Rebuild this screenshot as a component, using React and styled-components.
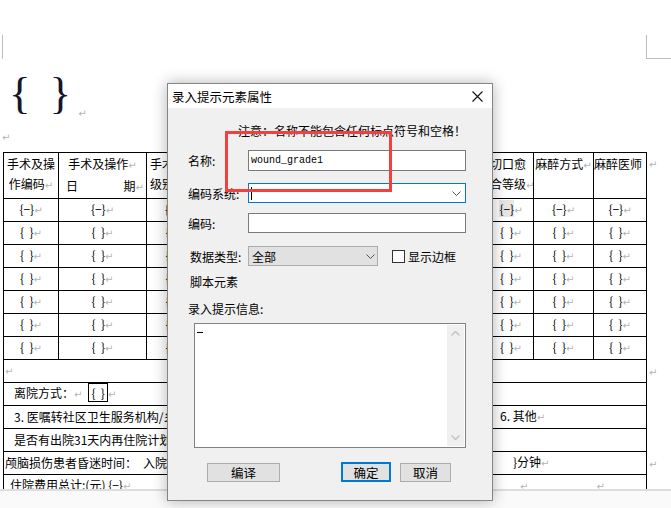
import styled, { createGlobalStyle } from 'styled-components'

const Global = createGlobalStyle`
  html, body { margin: 0; padding: 0; background: #fff; }
  body {
    font-family: "Noto Sans CJK SC", "Liberation Sans", sans-serif;
    font-size: 12px;
    color: #000;
  }
`
const Viewport = styled.div`
  position: relative;
  width: 671px;
  height: 508px;
  overflow: hidden;
  display: flex;
  flex-direction: column;
`
const Page = styled.div`
  height: 489px;
  flex: none;
  overflow: hidden;
  background: #fff;
  border-bottom: 2px solid #dedede;
`
const PageGap = styled.div`
  flex: 1;
  background: #fafafa;
`
const MarksRow = styled.div`
  display: flex;
  margin-top: 35px;
  height: 24px;
`
const CropMark = styled.div`
  box-sizing: border-box;
  width: ${p => p.right ? '25px' : '3px'};
  margin-left: ${p => p.right ? 'auto' : '0'};
  border-right: ${p => p.right ? 'none' : '1px solid #bdbdbd'};
  border-left: ${p => p.right ? '1px solid #bdbdbd' : 'none'};
  border-bottom: ${p => p.right ? '1px solid #bdbdbd' : 'none'};
`
const BraceLine = styled.div`
  display: flex;
  align-items: flex-end;
  height: 60px;
  padding-left: 9px;
`
const Brace = styled.span`
  font-family: "Liberation Serif", serif;
  font-size: 45px;
  line-height: 52px;
  color: #14142a;
  margin-right: ${p => p.gap || 0}px;
`
const Ret = styled.span`
  font-family: "DejaVu Sans", sans-serif;
  font-size: 10px;
  color: #b4b4b4;
  margin-left: ${p => p.ml || 0}px;
`
const EmptyPara = styled.div`
  display: flex;
  align-items: flex-end;
  height: 26px;
  padding-left: 2px;
  line-height: 14px;
  margin-bottom: 7px;
`
const DocTable = styled.table`
  border-collapse: collapse;
  table-layout: fixed;
  width: 665px;
  margin-left: 3px;
`
const Row = styled.tr`
  height: ${p => p.h || 23}px;
`
const Cell = styled.td`
  border: 1px solid #000;
  padding: ${p => p.top ? '1px' : '0'} ${p => p.pad || 0}px 0;
  text-align: ${p => p.align || 'center'};
  vertical-align: ${p => p.top ? 'top' : 'middle'};
  line-height: 20px;
  white-space: nowrap;
  overflow: hidden;
  font-size: 12px;
`
const OutCell = styled.td`
  border: none;
  padding: 0 0 0 2px;
  vertical-align: ${p => p.top ? 'top' : 'bottom'};
  line-height: 20px;
`
const Spread = styled.div`
  display: flex;
  justify-content: space-between;
  padding: 0 2px 0 7px;
`
const Mark = styled.span`
  background: ${p => p.hl ? '#e6e6e6' : 'transparent'};
`
const Boxed = styled.span`
  border: 1px solid #000;
  padding: 0 2px;
  margin-left: 6px;
`
const SplitLine = styled.div`
  display: flex;
  align-items: center;
  padding-left: ${p => p.pl || 0}px;
`
const RightPart = styled.span`
  margin-left: auto;
  width: ${p => p.w}px;
`

const Dialog = styled.div`
  position: absolute;
  left: 167px;
  top: 83px;
  width: 326px;
  height: 418px;
  box-sizing: border-box;
  border: 1px solid #858585;
  background: #f0f0f0;
  box-shadow: 0 0 14px rgba(0, 0, 0, 0.3);
  font-family: "Noto Sans CJK SC", "Liberation Sans", sans-serif;
  font-size: 12px;
`
const TitleBar = styled.div`
  height: 24px;
  background: #fff;
  display: flex;
  align-items: center;
  justify-content: space-between;
  padding: 0 9px 0 4px;
  font-size: 12.5px;
`
const Body = styled.div`
  position: relative;
  padding-left: 20px;
`
const Note = styled.div`
  margin-top: 13px;
  height: 20px;
  line-height: 20px;
  padding-left: 50px;
`
const Annotation = styled.div`
  position: absolute;
  left: 57px;
  top: 10px;
  width: 167px;
  height: 61px;
  box-sizing: border-box;
  border: 3px solid #f2403f;
`
const FieldRow = styled.div`
  display: flex;
  align-items: center;
  margin-top: ${p => p.mt}px;
  height: ${p => p.h || 20}px;
`
const Label = styled.div`
  width: ${p => p.w || 60}px;
  padding-left: ${p => p.pl || 0}px;
  box-sizing: border-box;
`
const TextInput = styled.div`
  box-sizing: border-box;
  width: 218px;
  height: ${p => p.h || 20}px;
  background: #fff;
  border: 1px solid ${p => p.focus ? '#0078d7' : '#7a7a7a'};
  display: flex;
  align-items: center;
  padding: 0 2px;
  font-family: "Liberation Mono", monospace;
  font-size: 10px;
`
const Caret = styled.span`
  width: 1px;
  height: 13px;
  background: #000;
`
const Chevron = styled.svg`
  margin-left: auto;
  margin-right: 2px;
`
const Select = styled.div`
  box-sizing: border-box;
  width: 130px;
  height: 20px;
  background: #e1e1e1;
  border: 1px solid #adadad;
  display: flex;
  align-items: center;
  padding-left: 3px;
`
const Check = styled.span`
  box-sizing: border-box;
  width: 13px;
  height: 13px;
  border: 1px solid #333;
  background: #fff;
  margin: 0 3px 0 14px;
`
const PlainLine = styled.div`
  margin-top: ${p => p.mt}px;
  height: 20px;
  line-height: 20px;
  padding-left: ${p => p.pl || 0}px;
`
const MemoBox = styled.div`
  box-sizing: border-box;
  margin: 4px 0 0 6px;
  width: 272px;
  height: 125px;
  background: #fff;
  border: 1px solid #828282;
  display: flex;
`
const MemoText = styled.div`
  flex: 1;
  padding: 6px 0 0 2px;
`
const Underscore = styled.div`
  width: 6px;
  height: 1px;
  background: #000;
  margin-top: 2px;
`
const ScrollBar = styled.div`
  width: 17px;
  background: #f0f0f0;
  margin: 1px 1px 1px 0;
  display: flex;
  flex-direction: column;
  justify-content: space-between;
  align-items: center;
  padding: 6px 0;
`
const ButtonRow = styled.div`
  display: flex;
  margin-top: 14px;
  padding-left: 19px;
  align-items: center;
`
const Button = styled.div`
  box-sizing: border-box;
  width: ${p => p.w}px;
  height: ${p => p.primary ? 20 : 19}px;
  margin-left: ${p => p.ml || 0}px;
  background: #e1e1e1;
  border: ${p => p.primary ? '2px solid #0078d7' : '1px solid #adadad'};
  display: flex;
  align-items: center;
  justify-content: center;
  font-size: 12.5px;
`

const down = (
  <Chevron width="9" height="5" viewBox="0 0 9 5">
    <path d="M0.5 0.5 L4.5 4.5 L8.5 0.5" fill="none" stroke="#555" strokeWidth="1" />
  </Chevron>
)

const Arrow = ({ up }) => (
  <svg width="9" height="5" viewBox="0 0 9 5">
    <path d={up ? 'M0.5 4.5 L4.5 0.5 L8.5 4.5' : 'M0.5 0.5 L4.5 4.5 L8.5 0.5'} fill="none" stroke="#c2c2c2" strokeWidth="1.4" />
  </svg>
)

const widths = [55, 88, 60, 140, 50, 46, 46, 45, 60, 53, 22]
const EMPTY = '{\u00a0\u00a0}'

const App = () => {
  const dataRows = [0, 1, 2, 3, 4, 5, 6]
  return (
    <Viewport>
      <Global />
      <Page>
        <MarksRow>
          <CropMark />
          <CropMark right />
        </MarksRow>
        <BraceLine>
          <Brace gap={19}>{'{'}</Brace>
          <Brace>{'}'}</Brace>
          <Ret ml={7}>↵</Ret>
        </BraceLine>
        <EmptyPara><Ret>↵</Ret></EmptyPara>
        <DocTable>
          <colgroup>
            {widths.map((w, i) => <col key={i} style={{ width: w }} />)}
          </colgroup>
          <tbody>
            <Row h={44}>
              <Cell top>手术及操<br />作编码<Ret>↵</Ret></Cell>
              <Cell top>手术及操作<Ret>↵</Ret><Spread><span>日</span><span>期<Ret>↵</Ret></span></Spread></Cell>
              <Cell top align="left" pad={3}>手术及操作<br />级别</Cell>
              <Cell top>手术及操作名称</Cell>
              <Cell top>术　者</Cell>
              <Cell top>Ⅰ　助</Cell>
              <Cell top>Ⅱ　助</Cell>
              <Cell top align="left" pad={1}>切口愈<br />合等级<Ret>↵</Ret></Cell>
              <Cell top>麻醉方式<Ret>↵</Ret></Cell>
              <Cell top align="left" pad={0}>麻醉医师</Cell>
              <OutCell top><Ret>↵</Ret></OutCell>
            </Row>
            {dataRows.map(r => (
              <Row key={r}>
                {widths.slice(0, 10).map((w, i) => (
                  <Cell key={i}>
                    <Mark hl={r === 0 && i === 7}>{r === 0 ? '{−}' : EMPTY}</Mark><Ret>↵</Ret>
                  </Cell>
                ))}
                <OutCell />
              </Row>
            ))}
            <Row>
              <Cell colSpan={10} align="left" pad={1}><Ret>↵</Ret></Cell>
              <OutCell><Ret>↵</Ret></OutCell>
            </Row>
            <Row>
              <Cell colSpan={10} align="left" pad={10}>
                离院方式：<Ret>↵</Ret><Boxed>{EMPTY}</Boxed><Ret>↵</Ret>
              </Cell>
              <OutCell />
            </Row>
            <Row>
              <Cell colSpan={10} align="left">
                <SplitLine pl={10}>
                  <span>3. 医嘱转社区卫生服务机构/乡镇卫生院，拟接收医疗机构名称：　4. 非医嘱离院</span>
                  <RightPart w={146}>6. 其他<Ret>↵</Ret></RightPart>
                </SplitLine>
              </Cell>
              <OutCell />
            </Row>
            <Row>
              <Cell colSpan={10} align="left" pad={10}>是否有出院31天内再住院计划：　无　有，目的：</Cell>
              <OutCell />
            </Row>
            <Row>
              <Cell colSpan={10} align="left">
                <SplitLine pl={1}>
                  <span>颅脑损伤患者昏迷时间：　入院前　天　小时　分钟　入院后　天　小时　{'{'}</span>
                  <RightPart w={133}>{'}'}分钟<Ret>↵</Ret></RightPart>
                </SplitLine>
              </Cell>
              <OutCell><Ret>↵</Ret></OutCell>
            </Row>
            <Row>
              <Cell colSpan={10} align="left">
                <SplitLine pl={6}>
                  <span>住院费用总计:(元) {'{−}'}<Ret>↵</Ret></span>
                  <RightPart w={126}><Ret>↵</Ret><Ret ml={68}>↵</Ret></RightPart>
                </SplitLine>
              </Cell>
              <OutCell />
            </Row>
          </tbody>
        </DocTable>
      </Page>
      <PageGap />

      <Dialog>
        <TitleBar>
          <span>录入提示元素属性</span>
          <svg width="11" height="11" viewBox="0 0 11 11">
            <path d="M0.5 0.5 L10.5 10.5 M10.5 0.5 L0.5 10.5" stroke="#111" strokeWidth="1.1" />
          </svg>
        </TitleBar>
        <Body>
          <Note>注意：名称不能包含任何标点符号和空格！</Note>
          <FieldRow mt={9} h={21}>
            <Label>名称:</Label>
            <TextInput h={21}>wound_grade1</TextInput>
          </FieldRow>
          <FieldRow mt={12}>
            <Label>编码系统:</Label>
            <TextInput focus><Caret />{down}</TextInput>
          </FieldRow>
          <FieldRow mt={10}>
            <Label>编码:</Label>
            <TextInput />
          </FieldRow>
          <FieldRow mt={13}>
            <Label pl={2}>数据类型:</Label>
            <Select>全部{down}</Select>
            <Check />
            <span>显示边框</span>
          </FieldRow>
          <PlainLine mt={6} pl={2}>脚本元素</PlainLine>
          <PlainLine mt={7}>录入提示信息:</PlainLine>
          <MemoBox>
            <MemoText><Underscore /></MemoText>
            <ScrollBar>
              <Arrow up />
              <Arrow />
            </ScrollBar>
          </MemoBox>
          <ButtonRow>
            <Button w={73}>编译</Button>
            <Button w={50} ml={61} primary>确定</Button>
            <Button w={51} ml={9}>取消</Button>
          </ButtonRow>
          <Annotation />
        </Body>
      </Dialog>
    </Viewport>
  )
}

export default App
